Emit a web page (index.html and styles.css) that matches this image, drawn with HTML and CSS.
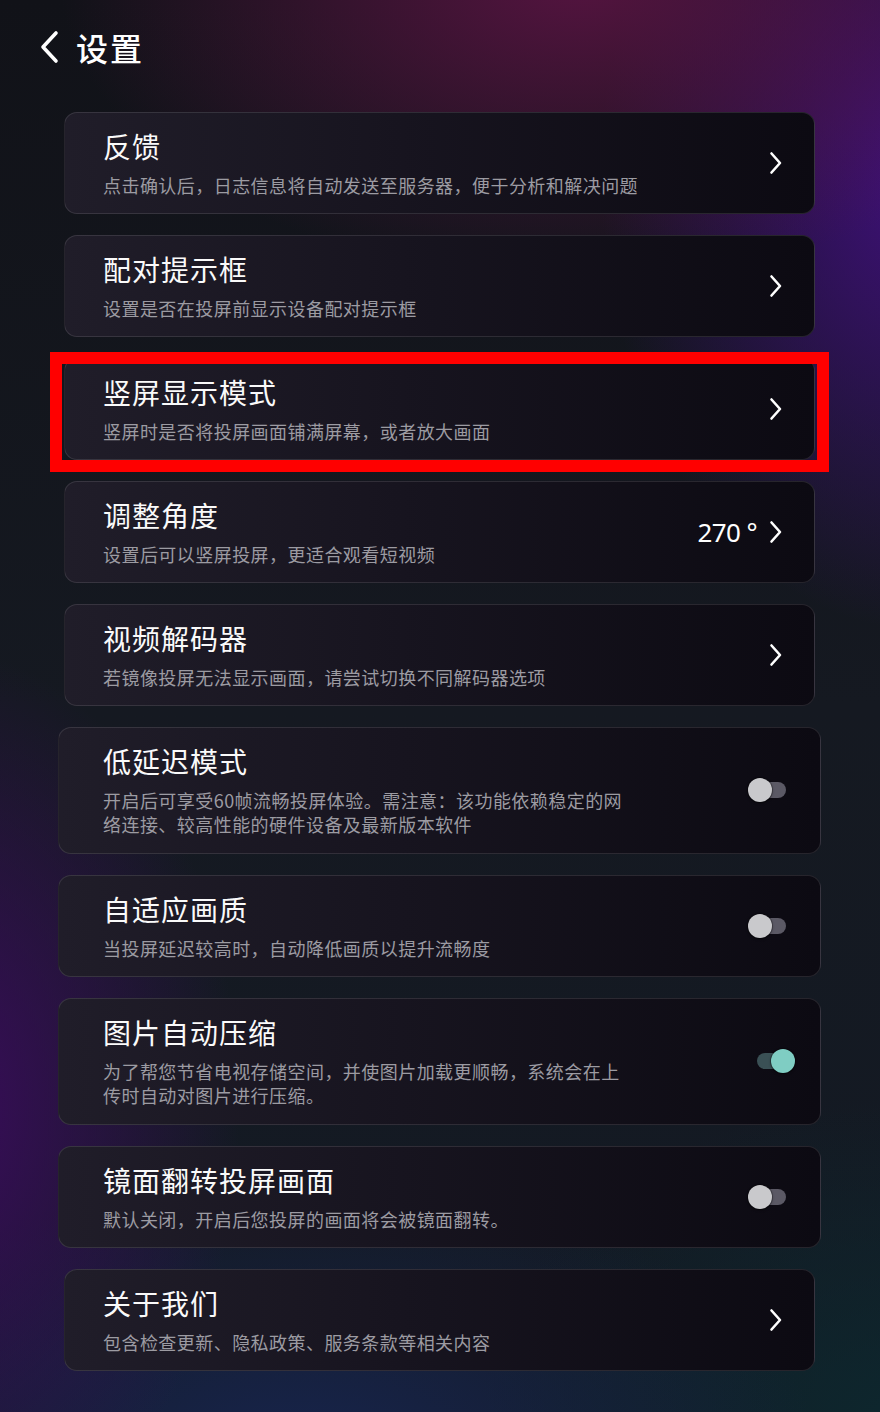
FILE: index.html
```html
<!DOCTYPE html>
<html lang="zh-CN">
<head>
<meta charset="utf-8">
<title>设置</title>
<link rel="stylesheet" href="styles.css">
</head>
<body>
<div class="page">
  <header class="topbar">
    <svg class="back" width="22" height="34" viewBox="0 0 22 34"><path d="M18 3 L5 17 L18 31" fill="none" stroke="#fff" stroke-width="3.6" stroke-linecap="round" stroke-linejoin="round"/></svg>
    <h1 class="page-title">设置</h1>
  </header>
  <main class="list">
    <div class="card card-link">
      <div class="text"><div class="title">反馈</div><div class="desc">点击确认后，日志信息将自动发送至服务器，便于分析和解决问题</div></div>
      <div class="trail"><svg class="chev" width="14" height="24" viewBox="0 0 14 24"><path d="M2.5 2.5 L11 12 L2.5 21.5" fill="none" stroke="#fff" stroke-width="2.6" stroke-linecap="round" stroke-linejoin="round"/></svg></div>
    </div>
    <div class="card card-link">
      <div class="text"><div class="title">配对提示框</div><div class="desc">设置是否在投屏前显示设备配对提示框</div></div>
      <div class="trail"><svg class="chev" width="14" height="24" viewBox="0 0 14 24"><path d="M2.5 2.5 L11 12 L2.5 21.5" fill="none" stroke="#fff" stroke-width="2.6" stroke-linecap="round" stroke-linejoin="round"/></svg></div>
    </div>
    <div class="card card-link card-marked">
      <div class="text"><div class="title">竖屏显示模式</div><div class="desc">竖屏时是否将投屏画面铺满屏幕，或者放大画面</div></div>
      <div class="trail"><svg class="chev" width="14" height="24" viewBox="0 0 14 24"><path d="M2.5 2.5 L11 12 L2.5 21.5" fill="none" stroke="#fff" stroke-width="2.6" stroke-linecap="round" stroke-linejoin="round"/></svg></div>
      <div class="highlight"></div>
    </div>
    <div class="card card-link">
      <div class="text"><div class="title">调整角度</div><div class="desc">设置后可以竖屏投屏，更适合观看短视频</div></div>
      <div class="trail"><span class="value">270 °</span><svg class="chev" width="14" height="24" viewBox="0 0 14 24"><path d="M2.5 2.5 L11 12 L2.5 21.5" fill="none" stroke="#fff" stroke-width="2.6" stroke-linecap="round" stroke-linejoin="round"/></svg></div>
    </div>
    <div class="card card-link">
      <div class="text"><div class="title">视频解码器</div><div class="desc">若镜像投屏无法显示画面，请尝试切换不同解码器选项</div></div>
      <div class="trail"><svg class="chev" width="14" height="24" viewBox="0 0 14 24"><path d="M2.5 2.5 L11 12 L2.5 21.5" fill="none" stroke="#fff" stroke-width="2.6" stroke-linecap="round" stroke-linejoin="round"/></svg></div>
    </div>
    <div class="card card-toggle card-tall">
      <div class="text"><div class="title">低延迟模式</div><div class="desc">开启后可享受60帧流畅投屏体验。需注意：该功能依赖稳定的网<br>络连接、较高性能的硬件设备及最新版本软件</div></div>
      <div class="toggle"><span class="track"></span><span class="knob"></span></div>
    </div>
    <div class="card card-toggle">
      <div class="text"><div class="title">自适应画质</div><div class="desc">当投屏延迟较高时，自动降低画质以提升流畅度</div></div>
      <div class="toggle"><span class="track"></span><span class="knob"></span></div>
    </div>
    <div class="card card-toggle card-tall">
      <div class="text"><div class="title">图片自动压缩</div><div class="desc">为了帮您节省电视存储空间，并使图片加载更顺畅，系统会在上<br>传时自动对图片进行压缩。</div></div>
      <div class="toggle on"><span class="track"></span><span class="knob"></span></div>
    </div>
    <div class="card card-toggle">
      <div class="text"><div class="title">镜面翻转投屏画面</div><div class="desc">默认关闭，开启后您投屏的画面将会被镜面翻转。</div></div>
      <div class="toggle"><span class="track"></span><span class="knob"></span></div>
    </div>
    <div class="card card-link">
      <div class="text"><div class="title">关于我们</div><div class="desc">包含检查更新、隐私政策、服务条款等相关内容</div></div>
      <div class="trail"><svg class="chev" width="14" height="24" viewBox="0 0 14 24"><path d="M2.5 2.5 L11 12 L2.5 21.5" fill="none" stroke="#fff" stroke-width="2.6" stroke-linecap="round" stroke-linejoin="round"/></svg></div>
    </div>
  </main>
</div>
</body>
</html>
```
FILE: styles.css
```css
* { box-sizing: border-box; }
html, body { margin: 0; padding: 0; }
body {
  min-height: 1412px;
  font-family: "Noto Sans CJK SC", "Noto Sans", sans-serif;
  color: #fff;
  background:
    radial-gradient(ellipse 520px 300px at 580px -20px, rgba(88, 20, 66, 0.95), rgba(88, 20, 66, 0) 100%),
    radial-gradient(ellipse 320px 460px at 920px 170px, rgba(66, 16, 128, 0.95), rgba(66, 16, 128, 0) 100%),
    radial-gradient(ellipse 300px 460px at -60px 1110px, rgba(58, 12, 92, 1), rgba(58, 12, 92, 0) 100%),
    radial-gradient(ellipse 520px 280px at 300px 1460px, rgba(24, 38, 84, 0.85), rgba(24, 38, 84, 0) 100%),
    radial-gradient(ellipse 420px 320px at 900px 1420px, rgba(12, 42, 48, 0.8), rgba(12, 42, 48, 0) 100%),
    linear-gradient(180deg, #111218 0%, #151921 50%, #131a24 100%);
}
.page { width: 880px; }
.topbar {
  display: flex;
  align-items: center;
  height: 94px;
  padding-left: 38px;
}
.back { display: block; }
.page-title {
  margin: 0 0 0 16px;
  font-size: 32px;
  font-weight: 500;
  letter-spacing: 2px;
  line-height: 40px;
}
.list {
  display: flex;
  flex-direction: column;
  gap: 21px;
  padding: 18px 59px 40px 58px;
}
.card {
  position: relative;
  display: flex;
  align-items: center;
  border: 1px solid rgba(255, 255, 255, 0.11);
  border-radius: 13px;
  background: linear-gradient(90deg, #201d29 0%, #17141f 45%, #0c0a12 100%);
  padding: 15px 32px 16px 38px;
}
.card-link { margin: 0 6px; }
.card-toggle { padding-left: 44px; padding-right: 25px; }
.card-tall { padding-bottom: 17px; }
.text { flex: 1; min-width: 0; }
.title {
  font-size: 28px;
  line-height: 36px;
  letter-spacing: 1px;
  color: #fafafa;
}
.desc {
  margin-top: 9px;
  font-size: 18px;
  line-height: 24px;
  letter-spacing: 0.45px;
  color: #9c9ba2;
}
.trail {
  display: flex;
  align-items: center;
}
.chev { display: block; margin-right: -1px; }
.value {
  font-family: "Noto Sans", sans-serif;
  font-size: 26px;
  letter-spacing: -0.6px;
  line-height: 32px;
  margin-right: 12px;
  color: #fff;
}
.highlight {
  position: absolute;
  left: -15px;
  top: -7px;
  right: -15px;
  bottom: -13px;
  border: 12px solid #ff0000;
  pointer-events: none;
}
.toggle {
  position: relative;
  width: 47px;
  height: 24px;
  flex: none;
}
.toggle .track {
  position: absolute;
  left: 3px;
  top: 4px;
  width: 35px;
  height: 16px;
  border-radius: 8px;
  background: #5b5965;
}
.toggle .knob {
  position: absolute;
  left: 0;
  top: 0;
  width: 24px;
  height: 24px;
  border-radius: 50%;
  background: #c9c9cc;
  box-shadow: 0 0 0 1px rgba(0, 0, 0, 0.25), 0 1px 3px rgba(0, 0, 0, 0.4);
}
.toggle.on .track { left: 9px; background: #3a5055; }
.toggle.on .knob { left: 23px; background: #7fcdc3; }
```
